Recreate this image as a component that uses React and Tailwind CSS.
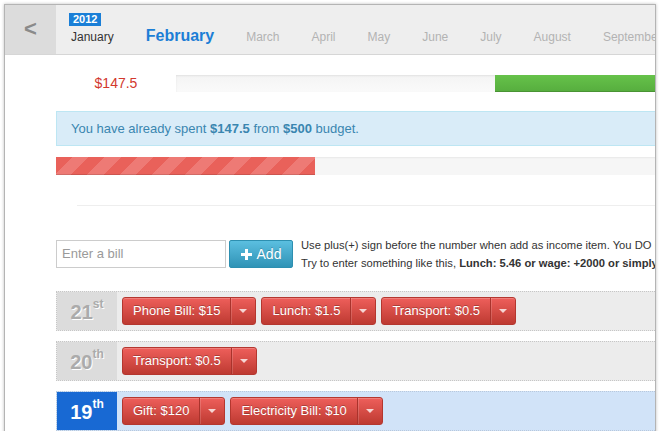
import React from 'react';

const months = ['March', 'April', 'May', 'June', 'July', 'August', 'September', 'October'];

const days = [
  { day: '21', suffix: 'st', items: ['Phone Bill: $15', 'Lunch: $1.5', 'Transport: $0.5'] },
  { day: '20', suffix: 'th', items: ['Transport: $0.5'] },
  { day: '19', suffix: 'th', items: ['Gift: $120', 'Electricity Bill: $10'], today: true },
];

const BillButton = ({ label }) => (
  <div className="flex h-[28px] rounded-[3px] border border-[#b4372f] bg-gradient-to-b from-[#ee5f5b] to-[#be3a31] text-[13px] text-white shadow-[inset_0_1px_0_rgba(255,255,255,0.2)]">
    <span className="flex items-center px-[10px] [text-shadow:0_-1px_0_rgba(0,0,0,0.25)]">{label}</span>
    <span className="flex w-[25px] items-center justify-center border-l border-[#a9332c] shadow-[inset_1px_0_0_rgba(255,255,255,0.15)]">
      <span className="h-0 w-0 border-l-[4px] border-r-[4px] border-t-[4px] border-l-transparent border-r-transparent border-t-[#f6d6d4]" />
    </span>
  </div>
);

const DayRow = ({ day, suffix, items, today }) => (
  <div
    className={`flex h-[40px] border border-dotted ${
      today ? 'border-[#b8c8dc] bg-[#d1e3f8]' : 'border-[#c6c6c6] bg-[#ececec]'
    }`}
  >
    <div
      className={`flex w-[60px] items-start justify-center pt-[9px] font-bold ${
        today
          ? 'bg-[#1869d3] text-white'
          : 'bg-[#dcdcdc] text-[#ababab] [text-shadow:1px_1px_0_#fff]'
      }`}
    >
      <span className="text-[20px] leading-[22px]">{day}</span>
      <span className="mt-[-4px] text-[12px] leading-[14px]">{suffix}</span>
    </div>
    <div className="flex items-start gap-[5px] pl-[5px] pt-[5px]">
      {items.map((item, idx) => (
        <BillButton key={idx} label={item} />
      ))}
    </div>
  </div>
);

export default function App() {
  return (
    <div className="h-[431px] w-[659px] overflow-hidden bg-white pl-[4px] pt-[4px] font-['Liberation_Sans',Arial,sans-serif]">
      <div className="h-[440px] w-[652px] overflow-hidden border-l border-r border-t border-[#b4b4b4] shadow-[0_0_3px_rgba(0,0,0,0.25)]">
        <div className="w-[940px]">
          {/* Month navigation */}
          <div className="flex h-[50px] border-b border-[#d6d6d6] bg-[#eeeeee]">
            <div className="flex w-[51px] items-center justify-center bg-[#dcdcdc] pb-[2px] text-[22px] font-bold text-[#8a8a8a]">
              &lt;
            </div>
            <div className="flex items-center gap-[32px] pl-[15px] pt-[14px] text-[12px] text-[#b3b3b3]">
              <span className="relative text-[#333]">
                <span className="absolute left-[-2px] top-[-15px] bg-[#1a7fd7] px-[4px] text-[11px] font-bold leading-[13px] text-white">
                  2012
                </span>
                January
              </span>
              <span className="mt-[-2px] text-[16px] font-bold text-[#1c7ed6]">February</span>
              {months.map((m) => (
                <span key={m}>{m}</span>
              ))}
            </div>
          </div>

          <div className="pl-[51px] pr-[12px]">
            {/* Spent summary */}
            <div className="mt-[20px] flex h-[17px] items-center">
              <div className="w-[120px] text-center text-[14px] leading-[17px] text-[#d2382d]">$147.5</div>
              <div className="flex h-[17px] flex-1 justify-end bg-gradient-to-b from-[#f4f4f4] to-[#fafafa] shadow-[inset_0_1px_2px_rgba(0,0,0,0.08)]">
                <div className="w-[438px] bg-gradient-to-b from-[#66c24a] to-[#56ad3e] shadow-[inset_0_-1px_0_rgba(0,0,0,0.15)]" />
              </div>
            </div>

            <div className="mt-[19px] flex h-[35px] items-center border border-[#bde6f3] bg-[#d9ecf8] pl-[14px] text-[13px] text-[#3a86b0]">
              <span>
                You have already spent <b>$147.5</b> from <b>$500</b> budget.
              </span>
            </div>

            <div className="mt-[11px] flex h-[18px] bg-[#f6f6f6] shadow-[inset_0_1px_2px_rgba(0,0,0,0.06)]">
              <div className="w-[259px] bg-[repeating-linear-gradient(135deg,#e9615a_0,#e9615a_11.5px,#ee7a75_11.5px,#ee7a75_23px)] shadow-[inset_0_-1px_0_rgba(0,0,0,0.12)]" />
            </div>

            <div className="ml-[21px] mt-[30px] h-px bg-[#eeeeee]" />

            {/* Add bill */}
            <div className="mt-[34px] flex h-[28px] items-start">
              <div className="flex h-[28px] w-[170px] items-center border border-[#cccccc] bg-white pl-[5px] text-[13px] text-[#9a9a9a]">
                Enter a bill
              </div>
              <button className="ml-[3px] flex h-[28px] w-[64px] items-center justify-center gap-[5px] rounded-[2px] border border-[#2d8fb0] bg-gradient-to-b from-[#5bbfe0] to-[#2f93b6] text-[14px] text-white [text-shadow:0_-1px_0_rgba(0,0,0,0.2)]">
                <svg width="11" height="11" viewBox="0 0 11 11">
                  <path d="M4 0h3v4h4v3H7v4H4V7H0V4h4z" fill="#fff" />
                </svg>
                Add
              </button>
              <div className="ml-[8px] mt-[-4px] whitespace-nowrap text-[11.2px] leading-[18px] text-[#333]">
                <div>Use plus(+) sign before the number when add as income item. You DO NOT need to type the dollar sign.</div>
                <div>
                  Try to enter something like this, <b>Lunch: 5.46 or wage: +2000 or simply , 12.5</b>
                </div>
              </div>
            </div>

            {/* Days */}
            <div className="mt-[23px] flex flex-col gap-[10px]">
              {days.map((d) => (
                <DayRow key={d.day} {...d} />
              ))}
            </div>
          </div>
        </div>
      </div>
    </div>
  );
}
